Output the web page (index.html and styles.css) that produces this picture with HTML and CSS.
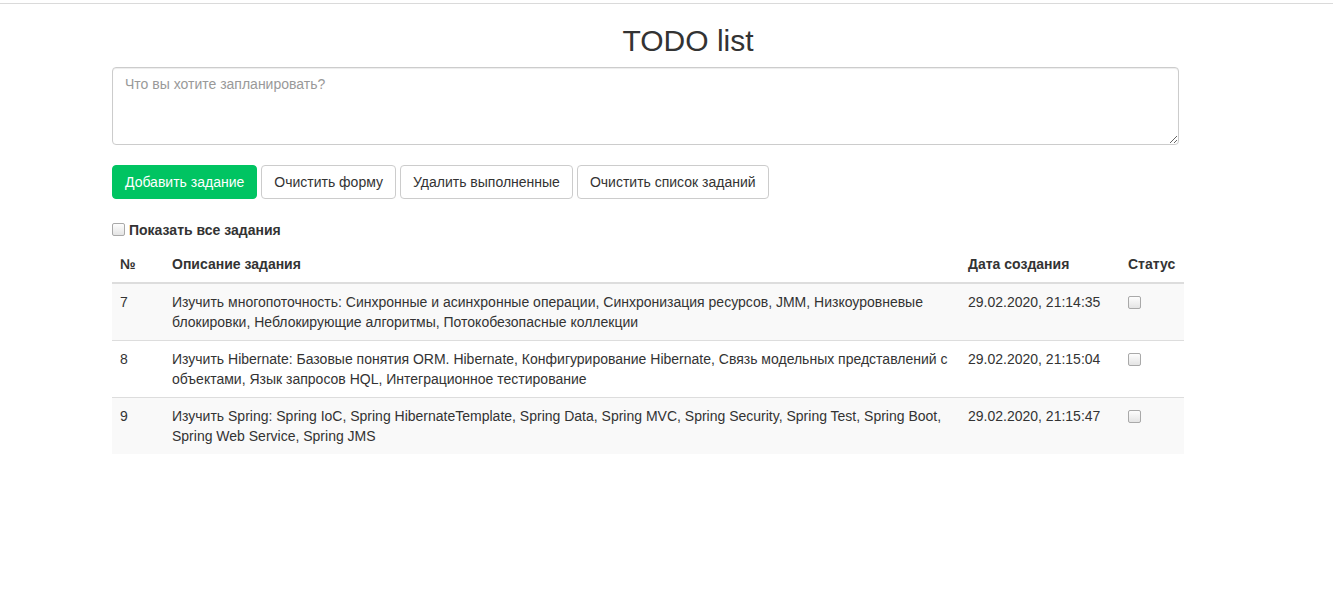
FILE: index.html
```html
<!DOCTYPE html>
<html lang="ru">
<head>
<meta charset="utf-8">
<title>TODO list</title>
<link rel="stylesheet" href="styles.css">
</head>
<body>
<div class="topline"></div>
<div class="page">
  <h2 class="title">TODO list</h2>
  <textarea class="task-input" placeholder="Что вы хотите запланировать?"></textarea>
  <div class="actions">
    <button class="btn btn-success">Добавить задание</button>
    <button class="btn">Очистить форму</button>
    <button class="btn">Удалить выполненные</button>
    <button class="btn">Очистить список заданий</button>
  </div>
  <label class="show-all"><input type="checkbox" class="cb"> Показать все задания</label>
  <table class="tasks">
    <thead>
      <tr>
        <th class="c-num">№</th>
        <th class="c-desc">Описание задания</th>
        <th class="c-date">Дата создания</th>
        <th class="c-status">Статус</th>
      </tr>
    </thead>
    <tbody>
      <tr>
        <td>7</td>
        <td>Изучить многопоточность: Синхронные и асинхронные операции, Синхронизация ресурсов, JMM, Низкоуровневые блокировки, Неблокирующие алгоритмы, Потокобезопасные коллекции</td>
        <td>29.02.2020, 21:14:35</td>
        <td><input type="checkbox" class="cb"></td>
      </tr>
      <tr>
        <td>8</td>
        <td>Изучить Hibernate: Базовые понятия ORM. Hibernate, Конфигурирование Hibernate, Связь модельных представлений с объектами, Язык запросов HQL, Интеграционное тестирование</td>
        <td>29.02.2020, 21:15:04</td>
        <td><input type="checkbox" class="cb"></td>
      </tr>
      <tr>
        <td>9</td>
        <td>Изучить Spring: Spring IoC, Spring HibernateTemplate, Spring Data, Spring MVC, Spring Security, Spring Test, Spring Boot, Spring Web Service, Spring JMS</td>
        <td>29.02.2020, 21:15:47</td>
        <td><input type="checkbox" class="cb"></td>
      </tr>
    </tbody>
  </table>
</div>
</body>
</html>
```
FILE: styles.css
```css
html, body {
  margin: 0;
  padding: 0;
  background: #fff;
}
body {
  font-family: "Liberation Sans", Arial, Helvetica, sans-serif;
  font-size: 14px;
  line-height: 20px;
  color: #333;
}
.topline {
  margin-top: 3px;
  border-top: 1px solid #dadada;
}
.page {
  margin-left: 112px;
  width: 1072px;
  display: flex;
  flex-direction: column;
}
.title {
  margin: 20px 0 0 0;
  width: 1152px;
  text-align: center;
  font-size: 30px;
  font-weight: 500;
  line-height: 33px;
  height: 43px;
}
.task-input {
  box-sizing: border-box;
  width: 1067px;
  height: 78px;
  padding: 6px 12px;
  border: 1px solid #ccc;
  border-radius: 4px;
  box-shadow: inset 0 1px 1px rgba(0,0,0,.075);
  font-family: inherit;
  font-size: 14px;
  line-height: 20px;
  color: #555;
  resize: vertical;
}
.task-input::placeholder {
  color: #999;
}
.actions {
  display: flex;
  gap: 4px;
  margin-top: 20px;
}
.btn {
  box-sizing: border-box;
  height: 34px;
  padding: 6px 12px;
  font-family: inherit;
  font-size: 14px;
  line-height: 20px;
  color: #333;
  background: #fff;
  border: 1px solid #ccc;
  border-radius: 4px;
}
.btn-success {
  color: #fff;
  background: #00c462;
  border-color: #00c462;
}
.show-all {
  display: flex;
  align-items: center;
  margin-top: 21px;
  font-weight: bold;
  line-height: 20px;
  height: 20px;
}
.show-all .cb {
  margin: 0 4px 2px 0;
}
.cb {
  -webkit-appearance: none;
  appearance: none;
  box-sizing: border-box;
  width: 13px;
  height: 13px;
  border: 1px solid #a9a9a9;
  border-radius: 2px;
  background: linear-gradient(#fdfdfd, #e4e4e4);
}
.tasks {
  margin-top: 6px;
  width: 1072px;
  border-collapse: collapse;
  border-spacing: 0;
}
.tasks th, .tasks td {
  padding: 8px;
  text-align: left;
  vertical-align: top;
  line-height: 20px;
}
.tasks th {
  font-weight: bold;
  border-bottom: 2px solid #ddd;
}
.tasks td {
  border-top: 1px solid #ddd;
}
.tasks tbody tr:first-child td {
  border-top: 0;
}
.tasks tbody tr:nth-child(odd) {
  background: #f9f9f9;
}
.c-num { width: 36px; }
.c-desc { width: 780px; }
.c-date { width: 144px; }
.c-status { width: 48px; }
.tasks td .cb {
  margin: 4px 0 0 0;
}
```
